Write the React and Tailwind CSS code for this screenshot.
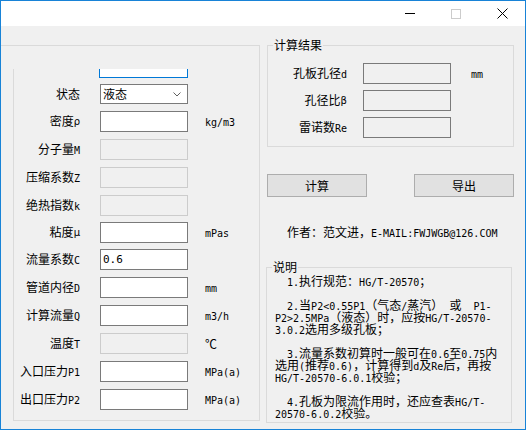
import React from "react";

const mono = "font-['DejaVu_Sans_Mono',monospace] text-[10px] text-black";

// SimSun-like mix: ASCII runs in a 6px-wide mono, greek small
function T({ s }) {
  const parts = s.split(/([\x20-\x7e]+|[\u00b5\u0370-\u03ff]+)/).filter(Boolean);
  return parts.map((p, i) => {
    if (/^[\x20-\x7e]+$/.test(p)) return <span key={i} className={mono}>{p}</span>;
    if (/^[\u00b5\u0370-\u03ff]+$/.test(p))
      return <span key={i} className="font-['DejaVu_Sans',sans-serif] text-[10px] align-[1px]">{p}</span>;
    return <span key={i}>{p}</span>;
  });
}

const rows = [
  { label: "密度ρ", unit: "kg/m3", mt: "mt-[7px]" },
  { label: "分子量M", dis: true, mt: "mt-[7px]" },
  { label: "压缩系数Z", dis: true, mt: "mt-[7px]" },
  { label: "绝热指数k", dis: true, mt: "mt-[7px]" },
  { label: "粘度μ", unit: "mPas", mt: "mt-[6px]" },
  { label: "流量系数C", value: "0.6", mt: "mt-[6px]" },
  { label: "管道内径D", unit: "mm", mt: "mt-[7px]" },
  { label: "计算流量Q", unit: "m3/h", mt: "mt-[7px]" },
  { label: "温度T", unit: "℃", dis: true, mt: "mt-[7px]" },
  { label: "入口压力P1", unit: "MPa(a)", mt: "mt-[7px]" },
  { label: "出口压力P2", unit: "MPa(a)", mt: "mt-[7px]" },
];

const results = ["孔板孔径d", "孔径比β", "雷诺数Re"];

const notes = [
  "  1.执行规范：HG/T-20570；",
  "",
  "  2.当P2<0.55P1（气态/蒸汽） 或  P1-",
  "P2>2.5MPa（液态）时，应按HG/T-20570-",
  "3.0.2选用多级孔板；",
  "",
  "  3.流量系数初算时一般可在0.6至0.75内",
  "选用(推荐0.6)，计算得到d及Re后，再按",
  "HG/T-20570-6.0.1校验；",
  "",
  "  4.孔板为限流作用时，还应查表HG/T-",
  "20570-6.0.2校验。",
];

export default function App() {
  return (
    <div className="w-[526px] h-[430px] border border-[#1883d7] flex flex-col font-['Noto_Sans_CJK_SC',sans-serif] text-[12px] leading-[12px] text-black bg-[#f0f0f0] overflow-hidden">
      {/* title bar */}
      <div className="h-[25px] bg-white flex justify-end shrink-0">
        <div className="w-[46px] flex items-center justify-center">
          <div className="w-[10px] h-0 border-t border-black" />
        </div>
        <div className="w-[46px] flex items-center justify-center">
          <div className="w-[10px] h-[10px] border border-[#cccccc]" />
        </div>
        <div className="w-[46px] flex items-center justify-center">
          <svg width="11" height="11" viewBox="0 0 11 11">
            <path d="M0.5 0.5L10.5 10.5M10.5 0.5L0.5 10.5" stroke="#000" strokeWidth="1" fill="none" />
          </svg>
        </div>
      </div>

      {/* body */}
      <div className="flex-1 flex">
        {/* left panel */}
        <div className="w-[259px] mt-[19px] h-[376px] border-t border-r border-[#dadada] pt-[23px] flex flex-col">
          <div className="ml-[12px] flex-1 border-l border-b border-[#dadada] overflow-hidden flex flex-col">
            <div className="ml-[85px] mt-[-12px] w-[89px] h-[21px] border border-[#0078d7] bg-white" />
            <div className="flex items-center mt-[6px] h-[20px]">
              <div className="w-[66px] text-right">状态</div>
              <div className="ml-[20px] w-[88px] h-[20px] border border-[#7a7a7a] bg-white flex items-center justify-between pl-[2px] pr-[6px]">
                <span>液态</span>
                <svg width="8" height="5" viewBox="0 0 8 5">
                  <path d="M0.5 0.5L4 4L7.5 0.5" stroke="#606060" strokeWidth="1" fill="none" />
                </svg>
              </div>
            </div>
            {rows.map((r) => (
              <div key={r.label} className={"flex items-center h-[21px] " + r.mt}>
                <div className="w-[66px] text-right whitespace-nowrap">
                  <T s={r.label} />
                </div>
                <div
                  className={
                    "ml-[20px] w-[88px] h-[21px] border flex items-center pl-[2px] " +
                    (r.dis ? "border-[#cccccc] bg-[#f0f0f0]" : "border-[#7a7a7a] bg-white")
                  }
                >
                  {r.value && <span className={mono + " text-[11px]"}>{r.value}</span>}
                </div>
                {r.unit && (
                  <div className="ml-[17px] whitespace-nowrap text-black">
                    <T s={r.unit} />
                  </div>
                )}
              </div>
            ))}
          </div>
        </div>

        {/* right panel */}
        <div className="ml-[7px] w-[247px] pt-[19px] flex flex-col">
          <div className="relative border border-[#dadada] h-[102px] pt-[17px] flex flex-col gap-[6px]">
            <div className="absolute left-[5px] top-[-7px] bg-[#f0f0f0] px-px">计算结果</div>
            {results.map((l, i) => (
              <div key={l} className="flex items-center h-[21px]">
                <div className="w-[79px] text-right whitespace-nowrap">
                  <T s={l} />
                </div>
                <div className="ml-[16px] w-[88px] h-[21px] border border-[#7a7a7a] bg-[#f0f0f0]" />
                {i === 0 && (
                  <div className="ml-[20px] text-black">
                    <T s="mm" />
                  </div>
                )}
              </div>
            ))}
          </div>

          <div className="mt-[27px] flex justify-between">
            <button className="w-[100px] h-[23px] bg-[#e1e1e1] border border-[#adadad]">计算</button>
            <button className="w-[100px] h-[23px] bg-[#e1e1e1] border border-[#adadad]">导出</button>
          </div>

          <div className="mt-[29px] pl-[20px] whitespace-nowrap">
            <T s="作者：范文进，E-MAIL:FWJWGB@126.COM" />
          </div>

          <div className="relative mt-[27px] ml-[-1px] w-[246px] h-[156px] border border-[#dadada] pt-[7px] pl-[8px]">
            <div className="absolute left-[5px] top-[-7px] bg-[#f0f0f0] px-px">说明</div>
            {notes.map((n, i) => (
              <div key={i} className="h-[12px] whitespace-pre">
                <T s={n} />
              </div>
            ))}
          </div>
        </div>
      </div>
    </div>
  );
}
